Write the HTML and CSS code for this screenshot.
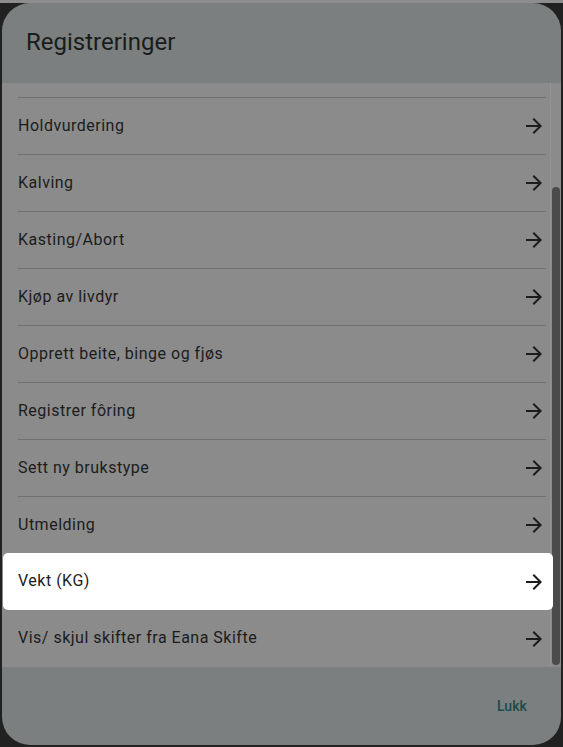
FILE: index.html
```html
<!DOCTYPE html>
<html lang="nb">
<head>
    <meta charset="UTF-8">
    <meta name="viewport" content="width=device-width, initial-scale=1.0">
    <title>Registreringer</title>
    <link rel="stylesheet" href="styles.css">
</head>
<body>
    <div class="appbar-edge"></div>
    <div class="page">
        <div class="dialog">
            <div class="dialog-header">
                <h2 class="dialog-title">Registreringer</h2>
            </div>

            <div class="dialog-list">
                <div class="list-items">
                    <div class="list-top"></div>
                    <div class="divider"></div>
                    <div class="item"><span>Holdvurdering</span><svg class="arrow" viewBox="0 -960 960 960"><path d="M647-440H160v-80h487L423-744l57-56 320 320-320 320-57-56 224-224Z"/></svg></div>
                    <div class="divider"></div>
                    <div class="item"><span>Kalving</span><svg class="arrow" viewBox="0 -960 960 960"><path d="M647-440H160v-80h487L423-744l57-56 320 320-320 320-57-56 224-224Z"/></svg></div>
                    <div class="divider"></div>
                    <div class="item"><span>Kasting/Abort</span><svg class="arrow" viewBox="0 -960 960 960"><path d="M647-440H160v-80h487L423-744l57-56 320 320-320 320-57-56 224-224Z"/></svg></div>
                    <div class="divider"></div>
                    <div class="item"><span>Kjøp av livdyr</span><svg class="arrow" viewBox="0 -960 960 960"><path d="M647-440H160v-80h487L423-744l57-56 320 320-320 320-57-56 224-224Z"/></svg></div>
                    <div class="divider"></div>
                    <div class="item"><span>Opprett beite, binge og fjøs</span><svg class="arrow" viewBox="0 -960 960 960"><path d="M647-440H160v-80h487L423-744l57-56 320 320-320 320-57-56 224-224Z"/></svg></div>
                    <div class="divider"></div>
                    <div class="item"><span>Registrer fôring</span><svg class="arrow" viewBox="0 -960 960 960"><path d="M647-440H160v-80h487L423-744l57-56 320 320-320 320-57-56 224-224Z"/></svg></div>
                    <div class="divider"></div>
                    <div class="item"><span>Sett ny brukstype</span><svg class="arrow" viewBox="0 -960 960 960"><path d="M647-440H160v-80h487L423-744l57-56 320 320-320 320-57-56 224-224Z"/></svg></div>
                    <div class="divider"></div>
                    <div class="item"><span>Utmelding</span><svg class="arrow" viewBox="0 -960 960 960"><path d="M647-440H160v-80h487L423-744l57-56 320 320-320 320-57-56 224-224Z"/></svg></div>
                    <!-- item in focus for the guide, drawn above the dimmed dialog -->
                    <div class="item spotlight"><span>Vekt (KG)</span><svg class="arrow" viewBox="0 -960 960 960"><path d="M647-440H160v-80h487L423-744l57-56 320 320-320 320-57-56 224-224Z"/></svg></div>
                    <div class="item last"><span>Vis/ skjul skifter fra Eana Skifte</span><svg class="arrow" viewBox="0 -960 960 960"><path d="M647-440H160v-80h487L423-744l57-56 320 320-320 320-57-56 224-224Z"/></svg></div>
                </div>
                <div class="scroll-track"><div class="scroll-thumb"></div></div>
            </div>

            <div class="dialog-actions">
                <button class="text-button">Lukk</button>
            </div>
        </div>
    </div>
</body>
</html>
```

FILE: styles.css
```css
html, body {
    margin: 0;
    padding: 0;
}
body {
    background-color: #212121;
    font-family: Roboto, "Noto Sans", sans-serif;
    width: 563px;
    height: 747px;
    overflow: hidden;
}
.appbar-edge {
    height: 3px;
    background-color: #8d8d8d;
}
.page {
    padding: 0 2px 2px 2px;
}
.dialog {
    height: 742px;
    border-radius: 28px;
    overflow: hidden;
    display: flex;
    flex-direction: column;
    background-color: #7b7f7f;
}
.dialog-header {
    height: 80px;
    padding: 23px 24px 0 24px;
    box-sizing: border-box;
    flex-shrink: 0;
}
.dialog-title {
    margin: 0;
    font-size: 24px;
    line-height: 32px;
    font-weight: 400;
    color: #1a1c1c;
}
.dialog-list {
    height: 584px;
    flex-shrink: 0;
    background-color: #8b8b8b;
    position: relative;
}
.list-items {
    height: 100%;
    overflow: hidden;
}
.list-top {
    height: 14px;
}
.divider {
    height: 1px;
    margin: 0 15px 0 16px;
    background-color: #707070;
}
.item {
    height: 56px;
    display: flex;
    align-items: center;
    justify-content: space-between;
    padding: 0 15px 0 16px;
    font-size: 16px;
    letter-spacing: 0.5px;
    color: #1c1c1c;
}
.item span {
    margin-top: -2px;
}
.item.last {
    height: 57px;
}
.item.spotlight {
    position: relative;
    z-index: 2;
    height: 57px;
    margin: 0 8px 0 1px;
    padding: 0 7px 0 15px;
    background-color: #ffffff;
    border-radius: 5px;
}
.arrow {
    width: 24px;
    height: 24px;
    fill: #1c1c1c;
    flex-shrink: 0;
}
.scroll-track {
    position: absolute;
    top: 0;
    right: 0;
    bottom: 0;
    width: 10px;
    border-left: 1px solid #949494;
    background-color: #8b8b8b;
}
.scroll-thumb {
    position: absolute;
    top: 104px;
    bottom: 2px;
    left: 1px;
    width: 8px;
    border-radius: 4px;
    background-color: #4b4b4b;
}
.dialog-actions {
    flex: 1;
    display: flex;
    justify-content: flex-end;
    align-items: center;
    padding: 0 22px 0 24px;
}
.text-button {
    background: none;
    border: none;
    padding: 10px 12px;
    font-family: Roboto, "Noto Sans", sans-serif;
    font-size: 14px;
    font-weight: 500;
    letter-spacing: 0.1px;
    color: #1d4a4a;
    cursor: pointer;
}
```
